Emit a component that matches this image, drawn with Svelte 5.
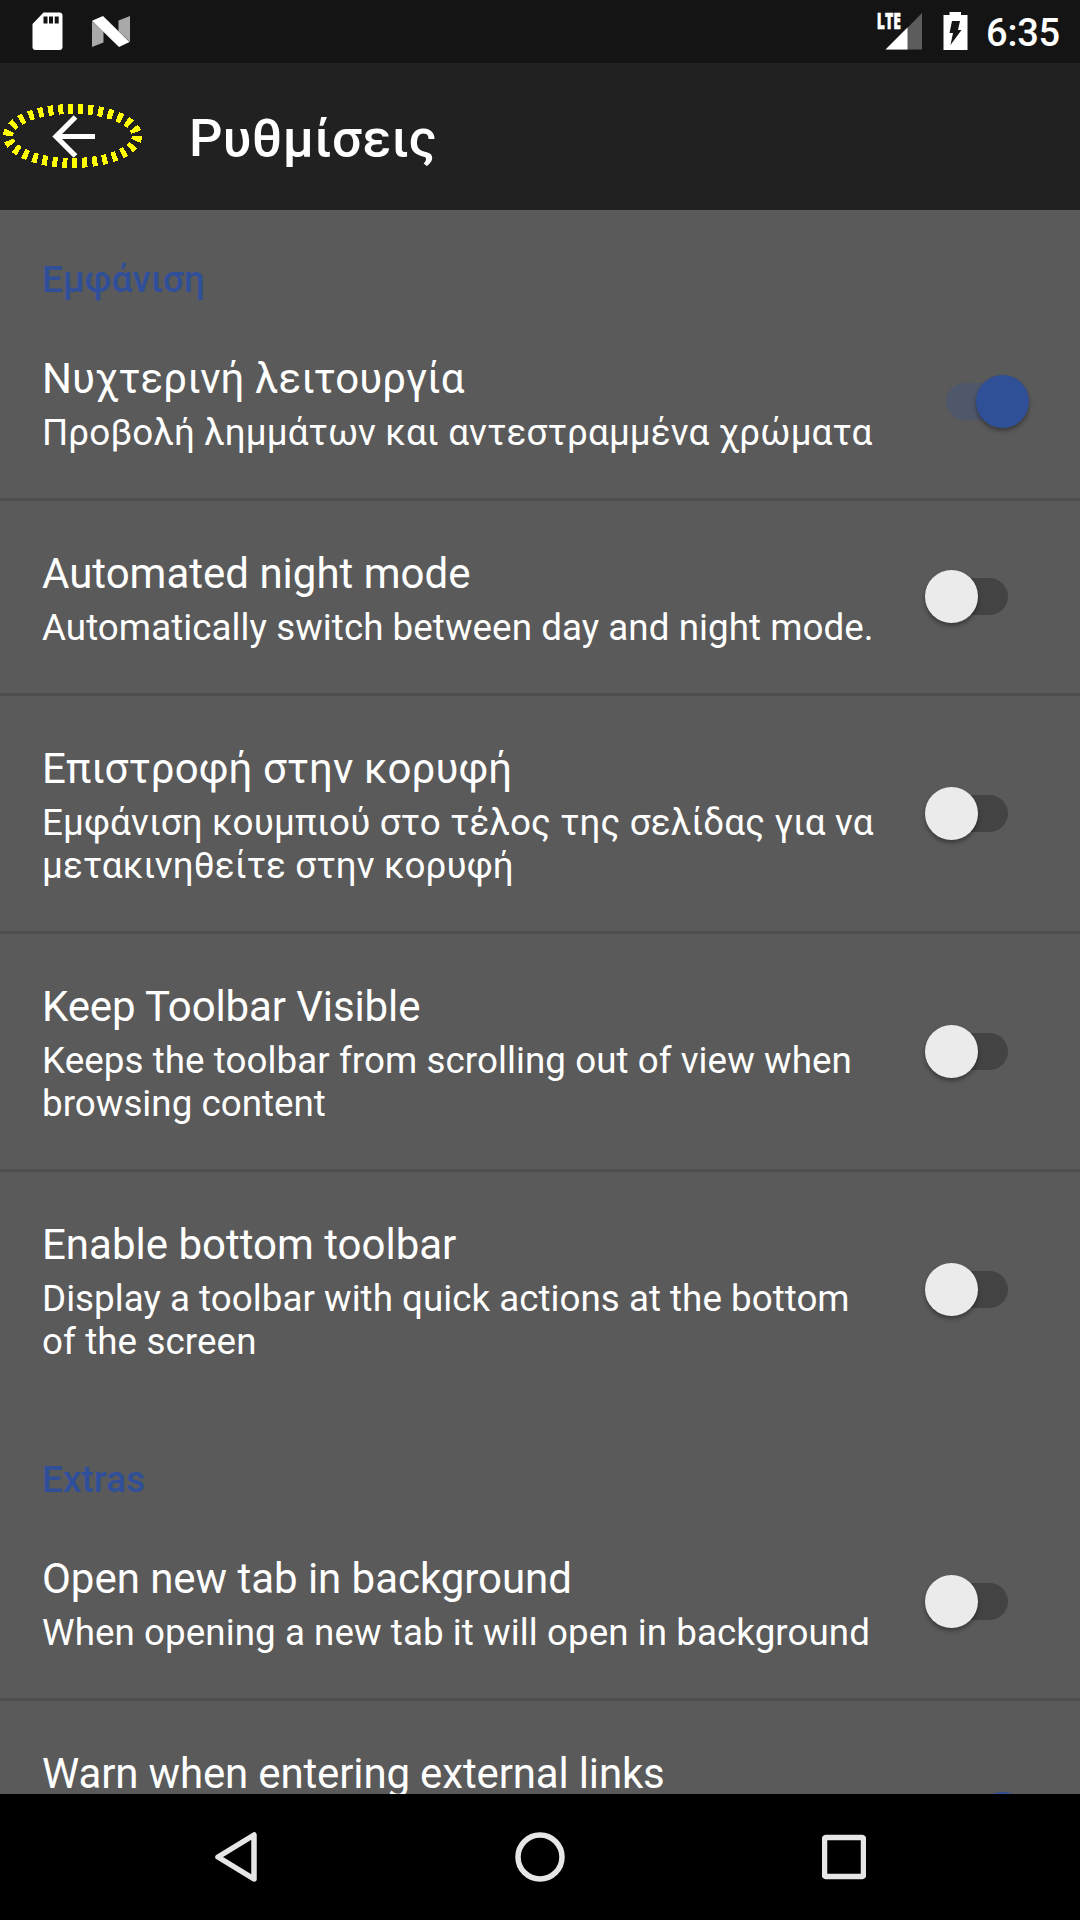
<script>
  // `track` is the letter spacing of each text in px
  let sections = $state([
    {
      title: 'Εμφάνιση',
      items: [
        {
          title: 'Νυχτερινή λειτουργία', track: 0.1, on: true,
          lines: [{ text: 'Προβολή λημμάτων και αντεστραμμένα χρώματα', track: 0.145 }]
        },
        {
          title: 'Automated night mode', track: 0, on: false,
          lines: [{ text: 'Automatically switch between day and night mode.', track: 0.05 }]
        },
        {
          title: 'Επιστροφή στην κορυφή', track: 0.12, on: false,
          lines: [
            { text: 'Εμφάνιση κουμπιού στο τέλος της σελίδας για να', track: 0.155 },
            { text: 'μετακινηθείτε στην κορυφή', track: 0.14 }
          ]
        },
        {
          title: 'Keep Toolbar Visible', track: -0.12, on: false,
          lines: [
            { text: 'Keeps the toolbar from scrolling out of view when', track: 0.06 },
            { text: 'browsing content', track: 0.02 }
          ]
        },
        {
          title: 'Enable bottom toolbar', track: 0, on: false,
          lines: [
            { text: 'Display a toolbar with quick actions at the bottom', track: 0.02 },
            { text: 'of the screen', track: 0.1 }
          ]
        }
      ]
    },
    {
      title: 'Extras',
      items: [
        {
          title: 'Open new tab in background', track: -0.04, on: false,
          lines: [{ text: 'When opening a new tab it will open in background', track: 0.06 }]
        },
        {
          title: 'Warn when entering external links', track: -0.15, on: true,
          lines: [{ text: '', track: 0 }, { text: '', track: 0 }]
        }
      ]
    }
  ]);
</script>

<div class="screen">
  <div class="status">
    <div class="notifications">
      <svg width="31" height="39" viewBox="0 0 31 39">
        <path d="M11.5.5H27.5a3 3 0 0 1 3 3V35a3 3 0 0 1-3 3H3.5a3 3 0 0 1-3-3V12Z" fill="#fff" />
        <path d="M11.5 4.500h4v7h-4zM17 4.500h4v7h-4zM22.700 4.500h4v7h-4z" fill="#141414" />
      </svg>
      <svg class="nougat" width="38" height="31" viewBox="0 0 38 31">
        <path d="M0 5 11.500 16v10.500L0 31ZM26.500 4.500 38 0v26L26.500 15Z" fill="#a9a9a9" />
        <path d="M0 4.700 11 0l26.500 26L27 31Z" fill="#fff" />
      </svg>
    </div>
    <div class="indicators">
      <svg width="48" height="38" viewBox="0 0 48 38">
        <path d="M46 1V37.500H10Z" fill="#5c5c5c" />
        <path d="M31.500 15.500V37.500H9.500Z" fill="#fff" />
        <path d="M0 0H28V14L24 18H0Z" fill="#141414" />
        <text class="lte" x="0.800" y="17" textLength="24" lengthAdjust="spacingAndGlyphs">LTE</text>
      </svg>
      <svg class="battery" width="25" height="38" viewBox="0 0 25 38">
        <path d="M6.500 0H18V3H24.500V38H.5V3H6.500Z" fill="#fff" />
        <path d="M9 9h8l-2 9h3.500L7.500 33l2.500-12H6.500Z" fill="#141414" />
      </svg>
      <span class="clock">6:35</span>
    </div>
  </div>

  <header>
    <button class="back" aria-label="Back">
      <svg width="147" height="73" viewBox="0 0 147 73">
        <path d="M95 36.500H56M75.500 17 56 36.500 75.500 56" fill="none" stroke="#fff" stroke-width="5.200" />
        <ellipse class="ring" cx="72.500" cy="36" rx="64.500" ry="27" />
      </svg>
    </button>
    <h1>Ρυθμίσεις</h1>
  </header>

  <main>
    {#each sections as section}
      <section>
        <h2>{section.title}</h2>
        {#each section.items as item}
          <div class="row">
            <div class="label">
              <div class="title" style:letter-spacing="{item.track}px">{item.title}</div>
              {#each item.lines as line}
                <div class="summary" style:letter-spacing="{line.track}px">{line.text}</div>
              {/each}
            </div>
            <button
              class="switch"
              class:on={item.on}
              role="switch"
              aria-checked={item.on}
              aria-label={item.title}
              onclick={() => (item.on = !item.on)}
            >
              <span class="knob"></span>
            </button>
          </div>
        {/each}
      </section>
    {/each}
  </main>

  <nav>
    <svg width="44" height="52" viewBox="0 0 44 52">
      <path d="M40 4V48L4 26Z" />
    </svg>
    <svg width="52" height="52" viewBox="0 0 52 52">
      <circle cx="26" cy="26" r="22" />
    </svg>
    <svg width="44" height="52" viewBox="0 0 44 52">
      <rect x="2.500" y="6.500" width="39" height="39" rx="1.500" />
    </svg>
  </nav>
</div>

<style>
  :global(body) {
    background: #5a5a5a;
  }
  .screen {
    width: 1080px;
    height: 1920px;
    display: flex;
    flex-direction: column;
    overflow: hidden;
    font-family: Roboto, sans-serif;
    color: #fff;
    background: #5a5a5a;
  }
  svg {
    display: block;
    flex: none;
  }
  button {
    border: 0;
    padding: 0;
    background: none;
  }
  .status {
    height: 63px;
    flex: none;
    display: flex;
    justify-content: space-between;
    background: #141414;
  }
  .notifications {
    display: flex;
    padding: 12px 0 0 32px;
  }
  .nougat {
    margin: 4px 0 0 29px;
  }
  .indicators {
    display: flex;
    padding: 12px 22px 0 0;
  }
  .lte {
    font: 800 22px 'Open Sans', sans-serif;
    fill: #fff;
    stroke: #fff;
    stroke-width: 0.5;
  }
  .battery {
    margin-left: 19px;
  }
  .clock {
    width: 72px;
    margin-left: 18px;
    font-size: 38px;
    font-weight: 500;
    line-height: 43px;
    letter-spacing: -0.2px;
    white-space: nowrap;
  }
  header {
    height: 147px;
    flex: none;
    display: flex;
    align-items: center;
    background: #212121;
  }
  .back {
    width: 147px;
    margin-right: 42px;
  }
  .ring {
    fill: none;
    stroke: #ff0;
    stroke-width: 10;
    stroke-dasharray: 5 5;
    shape-rendering: crispEdges;
  }
  h1 {
    margin: 2px 0 0;
    font-size: 52.5px;
    font-weight: 500;
    line-height: 62px;
    letter-spacing: 0.35px;
  }
  main {
    flex: 1;
    min-height: 0;
    overflow: hidden;
  }
  section + section {
    margin-top: 3px;
  }
  h2 {
    margin: 0;
    padding: 48px 42px 5px;
    font-size: 36.75px;
    font-weight: 500;
    line-height: 43px;
    letter-spacing: 0.12px;
    color: #304f9b;
  }
  .row {
    display: flex;
    align-items: center;
    justify-content: space-between;
    padding: 0 51px 0 42px;
  }
  .row + .row {
    border-top: 3px solid #4e4e4e;
  }
  .label {
    padding: 48px 0 44px;
    white-space: nowrap;
  }
  .title {
    font-size: 42px;
    line-height: 49px;
    margin-bottom: 8px;
  }
  .summary {
    min-height: 43px;
    font-size: 36.75px;
    line-height: 43px;
  }
  .switch {
    width: 104px;
    height: 53px;
    margin-bottom: 1px;
    flex: none;
    display: flex;
    align-items: center;
  }
  .switch::after {
    content: '';
    width: 62px;
    height: 37px;
    margin-left: -32px;
    border-radius: 19px;
    background: #434343;
  }
  .knob {
    width: 53px;
    height: 53px;
    border-radius: 50%;
    background: #ebebeb;
    box-shadow: 0 3px 4px rgba(0, 0, 0, 0.35);
    z-index: 1;
  }
  .switch.on {
    flex-direction: row-reverse;
  }
  .switch.on::after {
    margin: 0 -32px 0 0;
    background: #4f576b;
  }
  .switch.on .knob {
    background: #2f4f97;
  }
  nav {
    height: 126px;
    flex: none;
    display: grid;
    grid-template-columns: 304px 304px 304px;
    justify-content: center;
    align-items: center;
    justify-items: center;
    background: #000;
  }
  nav svg {
    fill: none;
    stroke: #e6e6e6;
    stroke-width: 5.5;
    stroke-linejoin: round;
  }
</style>
